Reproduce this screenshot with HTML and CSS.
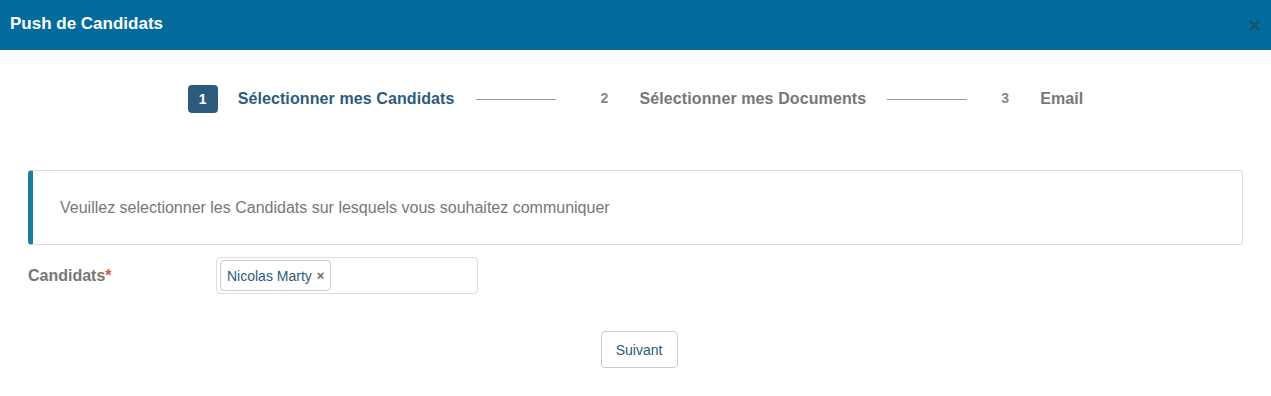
FILE: index.html
```html
<!DOCTYPE html>
<html lang="fr">
<head>
    <meta charset="UTF-8">
    <title>Push de Candidats</title>
    <link rel="stylesheet" href="styles.css">
</head>
<body>
    <div class="modal-header">
        <h1>Push de Candidats</h1>
        <span class="close">&times;</span>
    </div>

    <div class="modal-body">
        <div class="steps">
            <div class="step active">
                <span class="step-num">1</span>
                <span class="step-label">Sélectionner mes Candidats</span>
            </div>
            <span class="step-line"></span>
            <div class="step">
                <span class="step-num">2</span>
                <span class="step-label">Sélectionner mes Documents</span>
            </div>
            <span class="step-line"></span>
            <div class="step step-last">
                <span class="step-num">3</span>
                <span class="step-label">Email</span>
            </div>
        </div>

        <div class="callout">Veuillez selectionner les Candidats sur lesquels vous souhaitez communiquer</div>

        <div class="form-row">
            <label class="form-label">Candidats<span class="required">*</span></label>
            <div class="tag-select">
                <span class="tag">Nicolas Marty <span class="tag-remove">&times;</span></span>
            </div>
        </div>

        <div class="actions">
            <button class="btn">Suivant</button>
        </div>
    </div>
</body>
</html>
```

FILE: styles.css
```css
body {
    margin: 0;
    font-family: "Liberation Sans", Arial, sans-serif;
    background: #fff;
    color: #333;
}
.modal-header {
    height: 50px;
    background-color: #036c9d;
    display: flex;
    align-items: center;
    justify-content: space-between;
    padding: 0 10px;
}
.modal-header h1 {
    margin: 0;
    color: #fff;
    font-size: 17px;
    font-weight: bold;
    padding-bottom: 3px;
}
.close {
    color: #1c4a68;
    font-size: 22px;
    font-weight: bold;
    opacity: 0.75;
    margin-top: 2px;
}
.modal-body {
    padding: 35px 28px 0 28px;
}
.steps {
    display: flex;
    align-items: center;
    justify-content: center;
    height: 28px;
}
.step {
    display: flex;
    align-items: center;
}
.step-num {
    width: 30px;
    height: 28px;
    display: flex;
    align-items: center;
    justify-content: center;
    font-size: 14px;
    font-weight: bold;
    color: #888;
    border-radius: 4px;
    margin-top: -2px;
}
.step.active .step-num {
    background-color: #2c5b7d;
    color: #fff;
    margin-top: 0;
}
.step-label {
    margin-left: 20px;
    font-size: 16px;
    font-weight: bold;
    color: #777;
    letter-spacing: 0.1px;
}
.step.active .step-label {
    color: #2c5b7d;
}
.step-line {
    width: 80px;
    height: 1px;
    background-color: #999;
    margin: 0 20px 0 21px;
}
.step-line + .step .step-num {
    margin-left: 14px;
}
.step-line + .step-last .step-num {
    margin-left: 3px;
}
.callout {
    margin-top: 57px;
    height: 75px;
    box-sizing: border-box;
    border: 1px solid #ddd;
    border-left: 5px solid #1a7f9d;
    border-radius: 4px;
    padding: 0 27px;
    display: flex;
    align-items: center;
    font-size: 16px;
    color: #777;
}
.form-row {
    display: flex;
    align-items: center;
    margin-top: 12px;
}
.form-label {
    width: 188px;
    font-size: 16px;
    font-weight: bold;
    color: #777;
}
.required {
    color: #e74c3c;
}
.tag-select {
    width: 262px;
    height: 37px;
    box-sizing: border-box;
    border: 1px solid #ddd;
    border-radius: 4px;
    padding: 2px 3px;
    display: flex;
    align-items: center;
}
.tag {
    display: inline-flex;
    align-items: center;
    height: 31px;
    box-sizing: border-box;
    border: 1px solid #ccc;
    border-radius: 4px;
    padding: 0 6px;
    font-size: 14px;
    color: #2c5b7d;
}
.tag-remove {
    margin-left: 5px;
    color: #666;
    font-size: 13px;
    font-weight: bold;
}
.actions {
    display: flex;
    justify-content: center;
    margin-top: 37px;
}
.btn {
    font-family: "Liberation Sans", Arial, sans-serif;
    font-size: 14px;
    color: #2c5b7d;
    background: #fff;
    border: 1px solid #ccc;
    border-radius: 4px;
    width: 77px;
    height: 37px;
    padding: 0;
    margin-left: 7px;
}
```
